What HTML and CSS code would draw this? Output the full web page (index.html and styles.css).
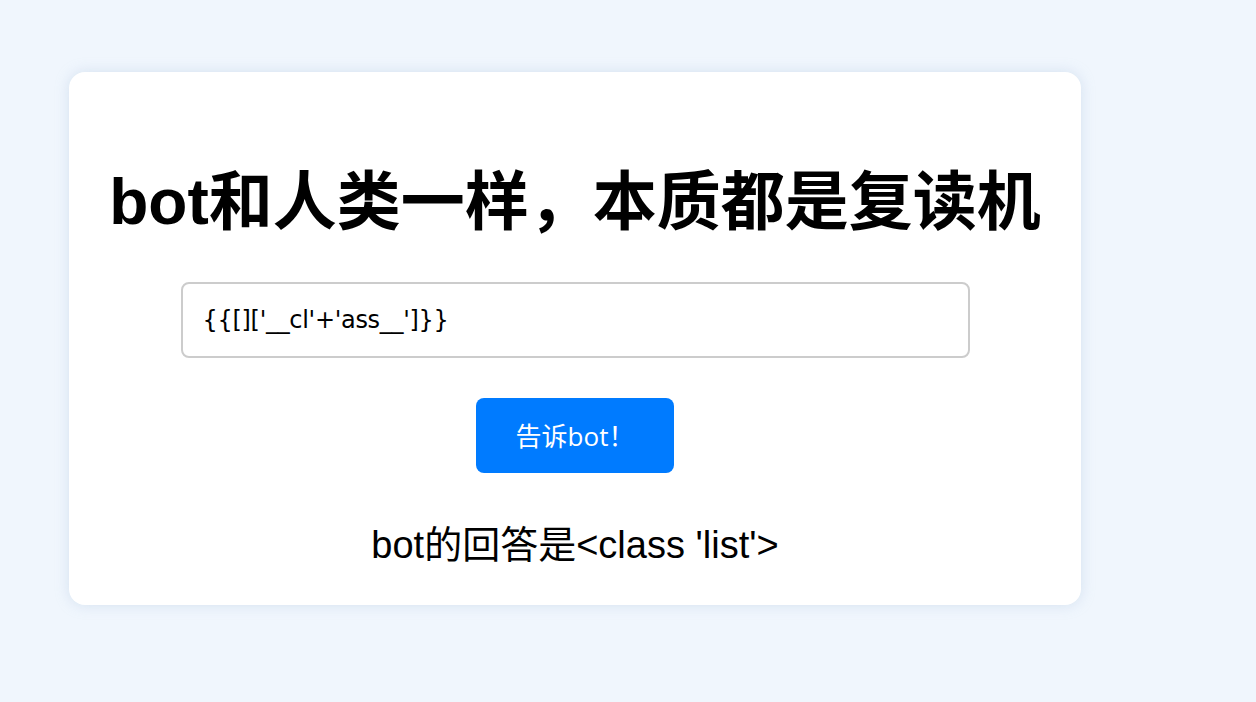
FILE: index.html
```html
<!DOCTYPE html>
<html lang="zh">
<head>
<meta charset="utf-8">
<title>bot</title>
<link rel="stylesheet" href="styles.css">
</head>
<body>
<div class="card">
  <h1 class="title">bot和人类一样，本质都是复读机</h1>
  <form class="form">
    <input class="input" type="text" value="{{[]['__cl'+'ass__']}}">
    <button class="btn" type="button">告诉bot！</button>
  </form>
  <p class="answer">bot的回答是&lt;class 'list'&gt;</p>
</div>
</body>
</html>
```
FILE: styles.css
```css
html, body {
  margin: 0;
  padding: 0;
  background: #f0f6fd;
  height: 100%;
}
body {
  font-family: "Liberation Sans", "Noto Sans CJK SC", sans-serif;
  color: #000;
}
.card {
  box-sizing: border-box;
  width: 1012px;
  height: 533px;
  margin: 72px 0 0 69px;
  background: #fff;
  border-radius: 16px;
  box-shadow: 0 0 14px rgba(160, 185, 215, 0.35);
  display: flex;
  flex-direction: column;
  align-items: center;
  padding-top: 94px;
}
.title {
  margin: 0;
  font-size: 64px;
  line-height: 72px;
  font-weight: bold;
}
.form {
  display: flex;
  flex-direction: column;
  align-items: center;
  margin-top: 44px;
}
.input {
  box-sizing: border-box;
  width: 789px;
  height: 76px;
  border: 2px solid #ccc;
  border-radius: 8px;
  padding: 0 20px;
  font-family: "DejaVu Sans", "Noto Sans CJK SC", sans-serif;
  font-size: 24px;
  letter-spacing: -0.3px;
  color: #000;
  outline: none;
}
.btn {
  margin-top: 40px;
  width: 198px;
  height: 75px;
  border: none;
  border-radius: 8px;
  background: #007bff;
  color: #fff;
  font-family: "Open Sans", "Noto Sans CJK SC", sans-serif;
  font-size: 26px;
  padding: 0 0 2px 0;
}
.answer {
  margin: 48px 0 0;
  font-size: 38px;
  line-height: 48px;
}
```
